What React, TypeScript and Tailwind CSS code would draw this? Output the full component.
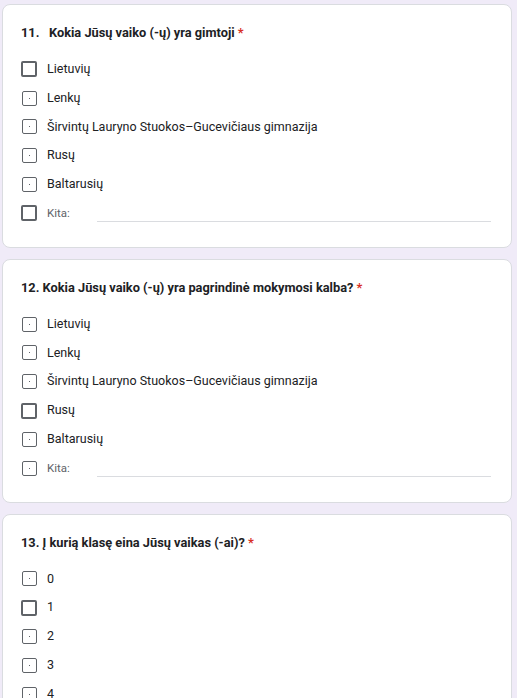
type Option = { label: string; big?: boolean; other?: boolean };

type Question = { title: string; options: Option[] };

const schools = "Širvintų Lauryno Stuokos–Gucevičiaus gimnazija";

const questions: Question[] = [
  {
    title: "11.\u00a0\u00a0 Kokia Jūsų vaiko (-ų) yra gimtoji",
    options: [
      { label: "Lietuvių", big: true },
      { label: "Lenkų" },
      { label: schools },
      { label: "Rusų" },
      { label: "Baltarusių" },
      { label: "Kita:", big: true, other: true },
    ],
  },
  {
    title: "12. Kokia Jūsų vaiko (-ų) yra pagrindinė mokymosi kalba?",
    options: [
      { label: "Lietuvių" },
      { label: "Lenkų" },
      { label: schools },
      { label: "Rusų", big: true },
      { label: "Baltarusių" },
      { label: "Kita:", other: true },
    ],
  },
  {
    title: "13. Į kurią klasę eina Jūsų vaikas (-ai)?",
    options: [
      { label: "0" },
      { label: "1", big: true },
      { label: "2" },
      { label: "3" },
      { label: "4" },
    ],
  },
];

function Checkbox({ big }: { big?: boolean }) {
  if (big) {
    return <span className="block h-4 w-4 shrink-0 rounded-[2px] border-2 border-[#5f6368]" />;
  }
  return (
    <span className="ml-px flex h-[15px] w-[15px] shrink-0 items-center justify-center rounded-[2px] border-[1.5px] border-[#5f6368]">
      <span className="h-px w-px bg-[#5f6368]" />
    </span>
  );
}

function QuestionCard({ q }: { q: Question }) {
  return (
    <section className="rounded-lg border border-[#dadce0] bg-white pt-[19px] pb-[19px] pl-[18px] pr-5">
      <h2 className="h-[18px] text-[12.8px] font-bold leading-[18px] text-[#202124]">
        {q.title} <span className="text-[#d93025]">*</span>
      </h2>
      <div className="mt-[13px] flex flex-col">
        {q.options.map((o, i) => (
          <div key={i} className="flex h-[28.8px] items-center gap-[10px]">
            <Checkbox big={o.big} />
            {o.other ? (
              <>
                <span className="text-[11.5px] text-[#5f6368]">{o.label}</span>
                <span className="ml-[17px] mt-4 h-px flex-1 bg-[#dadce0]" />
              </>
            ) : (
              <span className="text-[12.5px] text-[#202124]">{o.label}</span>
            )}
          </div>
        ))}
      </div>
    </section>
  );
}

export default function App() {
  return (
    <div
      className="min-h-screen bg-[#f0ebf8] pt-[4px] pl-[2px] pr-[5px]"
      style={{ fontFamily: "Roboto, 'Noto Sans', sans-serif" }}
    >
      <div className="flex flex-col gap-[11px]">
        {questions.map((q, i) => (
          <QuestionCard key={i} q={q} />
        ))}
      </div>
    </div>
  );
}
